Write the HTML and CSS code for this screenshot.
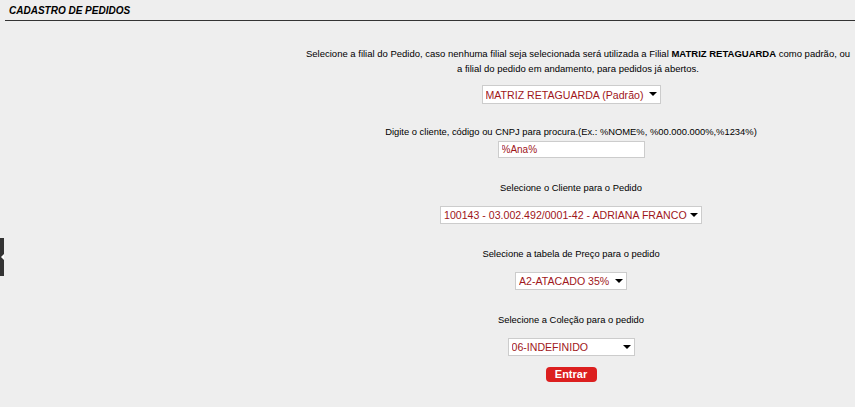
FILE: index.html
```html
<!DOCTYPE html>
<html lang="pt-BR">
<head>
  <meta charset="UTF-8" />
  <title>Cadastro de Pedidos</title>
  <link rel="stylesheet" href="styles.css">
</head>
<body>
  <div class="side-tab"><span class="side-arrow"></span></div>
  <div class="page-header">
    <h1>CADASTRO DE PEDIDOS</h1>
  </div>
  <div class="layout">
    <div class="spacer"></div>
    <form class="content">
      <p class="intro">Selecione a filial do Pedido, caso nenhuma filial seja selecionada será utilizada a Filial <b>MATRIZ RETAGUARDA</b> como padrão, ou<br>a filial do pedido em andamento, para pedidos já abertos.</p>
      <div class="field field-first">
        <span class="select-wrap w-filial">
          <select><option>MATRIZ RETAGUARDA (Padrão)</option></select>
        </span>
      </div>
      <div class="field field-search">
        <label>Digite o cliente, código ou CNPJ para procura.(Ex.: %NOME%, %00.000.000%,%1234%)</label>
        <input type="text" class="search" value="%Ana%" />
      </div>
      <div class="field">
        <label>Selecione o Cliente para o Pedido</label>
        <span class="select-wrap w-cliente">
          <select><option>100143 - 03.002.492/0001-42 - ADRIANA FRANCO</option></select>
        </span>
      </div>
      <div class="field">
        <label>Selecione a tabela de Preço para o pedido</label>
        <span class="select-wrap w-tabela">
          <select><option>A2-ATACADO 35%</option></select>
        </span>
      </div>
      <div class="field">
        <label>Selecione a Coleção para o pedido</label>
        <span class="select-wrap w-colecao">
          <select><option>06-INDEFINIDO</option></select>
        </span>
      </div>
      <div class="actions">
        <button type="button" class="btn-enter">Entrar</button>
      </div>
    </form>
  </div>
</body>
</html>
```

FILE: styles.css
```css
:root {
  --bg: #eeeeee;
  --text: #000000;
  --value: #a0161a;
  --border: #cccccc;
  --red: #dc1f1f;
}

body {
  margin: 0;
  background: var(--bg);
  color: var(--text);
  font-family: "Liberation Sans", Arial, sans-serif;
  font-size: 9.4px;
  line-height: 15px;
}

.side-tab {
  position: absolute;
  left: 0;
  top: 238px;
  width: 4px;
  height: 38px;
  background: #333333;
}

.side-arrow {
  position: absolute;
  left: 1px;
  top: 16px;
  border-style: solid;
  border-width: 3px 3px 3px 0;
  border-color: transparent #ffffff transparent transparent;
}

.page-header {
  padding: 3px 0 0 5px;
}

.page-header h1 {
  margin: 0;
  padding: 0 4px 2px;
  font-size: 10px;
  font-style: italic;
  font-weight: bold;
  border-bottom: 1px solid #333333;
}

.layout {
  display: flex;
}

.spacer {
  width: 287px;
}

.content {
  flex: 1;
  text-align: center;
  margin: 0;
}

.intro {
  margin: 25px 0 0;
  padding: 0 0 0 14px;
  font-size: 9.5px;
}

.field {
  margin-top: 22px;
}

.field label {
  display: block;
  margin-bottom: 11px;
}

.field-first {
  margin-top: 9px;
}

.field-search {
  margin-top: 20px;
}

.field-search label {
  margin-bottom: 2px;
}

.search {
  box-sizing: border-box;
  width: 147px;
  height: 17px;
  padding: 0 3px;
  border: 1px solid var(--border);
  background: #ffffff;
  color: var(--value);
  font-family: inherit;
  font-size: 10px;
  display: block;
  margin: 0 auto;
}

.select-wrap {
  position: relative;
  display: inline-block;
  vertical-align: top;
}

.select-wrap select {
  appearance: none;
  -webkit-appearance: none;
  box-sizing: border-box;
  width: 100%;
  height: 18px;
  padding: 0 8px 0 3px;
  border: 1px solid var(--border);
  border-radius: 0;
  background: #ffffff;
  color: var(--value);
  font-family: inherit;
  font-size: 10.6px;
  display: block;
}

.select-wrap::after {
  content: "";
  position: absolute;
  right: 4px;
  top: 7px;
  border-style: solid;
  border-width: 4px 4px 0 4px;
  border-color: #000000 transparent transparent transparent;
  pointer-events: none;
}

.w-filial { width: 179px; }
.w-filial select { height: 19px; }
.w-cliente { width: 262px; }
.w-tabela { width: 112px; }
.w-colecao { width: 127px; }

.actions {
  margin-top: 11px;
}

.btn-enter {
  width: 51px;
  height: 15px;
  padding: 0;
  border: none;
  border-radius: 4px;
  background: var(--red);
  color: #ffffff;
  font-family: inherit;
  font-size: 11px;
  font-weight: bold;
  line-height: 15px;
  cursor: pointer;
}
```
